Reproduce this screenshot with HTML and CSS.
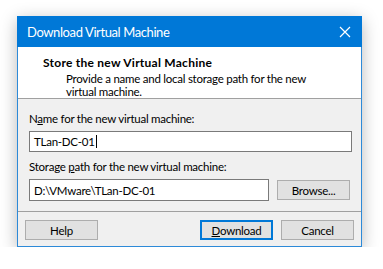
FILE: index.html
```html
<!DOCTYPE html>
<html>
<head>
<meta charset="utf-8">
<link rel="stylesheet" href="styles.css">
</head>
<body>
<div class="window">
  <div class="titlebar">
    <span class="title">Download Virtual Machine</span>
    <svg class="close" width="12" height="12" viewBox="0 0 12 12"><path d="M1 1 L11 11 M11 1 L1 11" stroke="#fff" stroke-width="1.2" fill="none"/></svg>
  </div>
  <div class="header">
    <div class="h-title">Store the new Virtual Machine</div>
    <div class="h-sub">Provide a name and local storage path for the new<br>virtual machine.</div>
  </div>
  <div class="content">
    <div class="label">N<u>a</u>me for the new virtual machine:</div>
    <div class="input name-input">TLan-DC-01<span class="caret"></span></div>
    <div class="label label2">Storage <u>p</u>ath for the new virtual machine:</div>
    <div class="row">
      <div class="input path-input">D:\VMware\TLan-DC-01</div>
      <div class="btn browse">Browse...</div>
    </div>
  </div>
  <div class="footer">
    <div class="btn">Help</div>
    <div class="spacer"></div>
    <div class="btn default"><u>D</u>ownload</div>
    <div class="btn">Cancel</div>
  </div>
</div>
</body>
</html>
```
FILE: styles.css
```css
html, body {
  margin: 0;
  padding: 0;
  background: #ffffff;
}
body {
  padding: 16px 0 0 17px;
  font-family: "Lato", "Noto Sans", sans-serif;
  font-size: 11.5px;
  letter-spacing: -0.25px;
  color: #000;
}
.window {
  width: 343px;
  height: 230px;
  border: 1px solid #2d8ad8;
  border-top: 0;
  background: #f0f0f0;
  box-shadow: 0 4px 16px rgba(0,0,0,0.28);
  display: flex;
  flex-direction: column;
}
.titlebar {
  height: 31px;
  margin: 0 -1px;
  background: #0078d7;
  color: #fff;
  display: flex;
  align-items: center;
  justify-content: space-between;
  padding: 0 10px 0 10px;
  flex-shrink: 0;
}
.title {
  font-size: 13px;
  letter-spacing: -0.4px;
}
.close {
  margin-right: 1px;
}
.header {
  background: #fff;
  height: 52px;
  border-bottom: 1px solid #a0a0a0;
  padding: 6px 0 0 25px;
  box-sizing: border-box;
  flex-shrink: 0;
}
.h-title {
  font-weight: bold;
  font-size: 12px;
  letter-spacing: 0.25px;
  line-height: 19px;
}
.h-sub {
  padding-left: 23px;
  line-height: 13px;
}
.content {
  padding: 12px 11px 0 11px;
  display: flex;
  flex-direction: column;
}
.label {
  line-height: 15px;
}
.label2 {
  margin-top: 7px;
}
.input {
  background: #fff;
  border: 1px solid #7a7a7a;
  height: 21px;
  box-sizing: border-box;
  padding: 0 4px;
  display: flex;
  align-items: center;
}
.name-input {
  margin-top: 5px;
  width: 323px;
}
.caret {
  display: inline-block;
  width: 1px;
  height: 13px;
  background: #000;
  margin-left: 1px;
}
.row {
  display: flex;
  margin-top: 5px;
  align-items: flex-start;
}
.path-input {
  width: 241px;
  height: 22px;
}
.btn {
  width: 73px;
  height: 20px;
  box-sizing: border-box;
  background: #e1e1e1;
  border: 1px solid #adadad;
  display: flex;
  align-items: center;
  justify-content: center;
}
.browse {
  margin-left: 8px;
  margin-top: 1px;
}
.footer {
  margin-top: auto;
  border-top: 1px solid #a0a0a0;
  height: 35px;
  box-sizing: border-box;
  display: flex;
  align-items: flex-start;
  padding: 8px 7px 0 7px;
  gap: 8px;
}
.spacer {
  flex: 1;
}
.btn.default {
  border: 2px solid #0078d7;
}
```
